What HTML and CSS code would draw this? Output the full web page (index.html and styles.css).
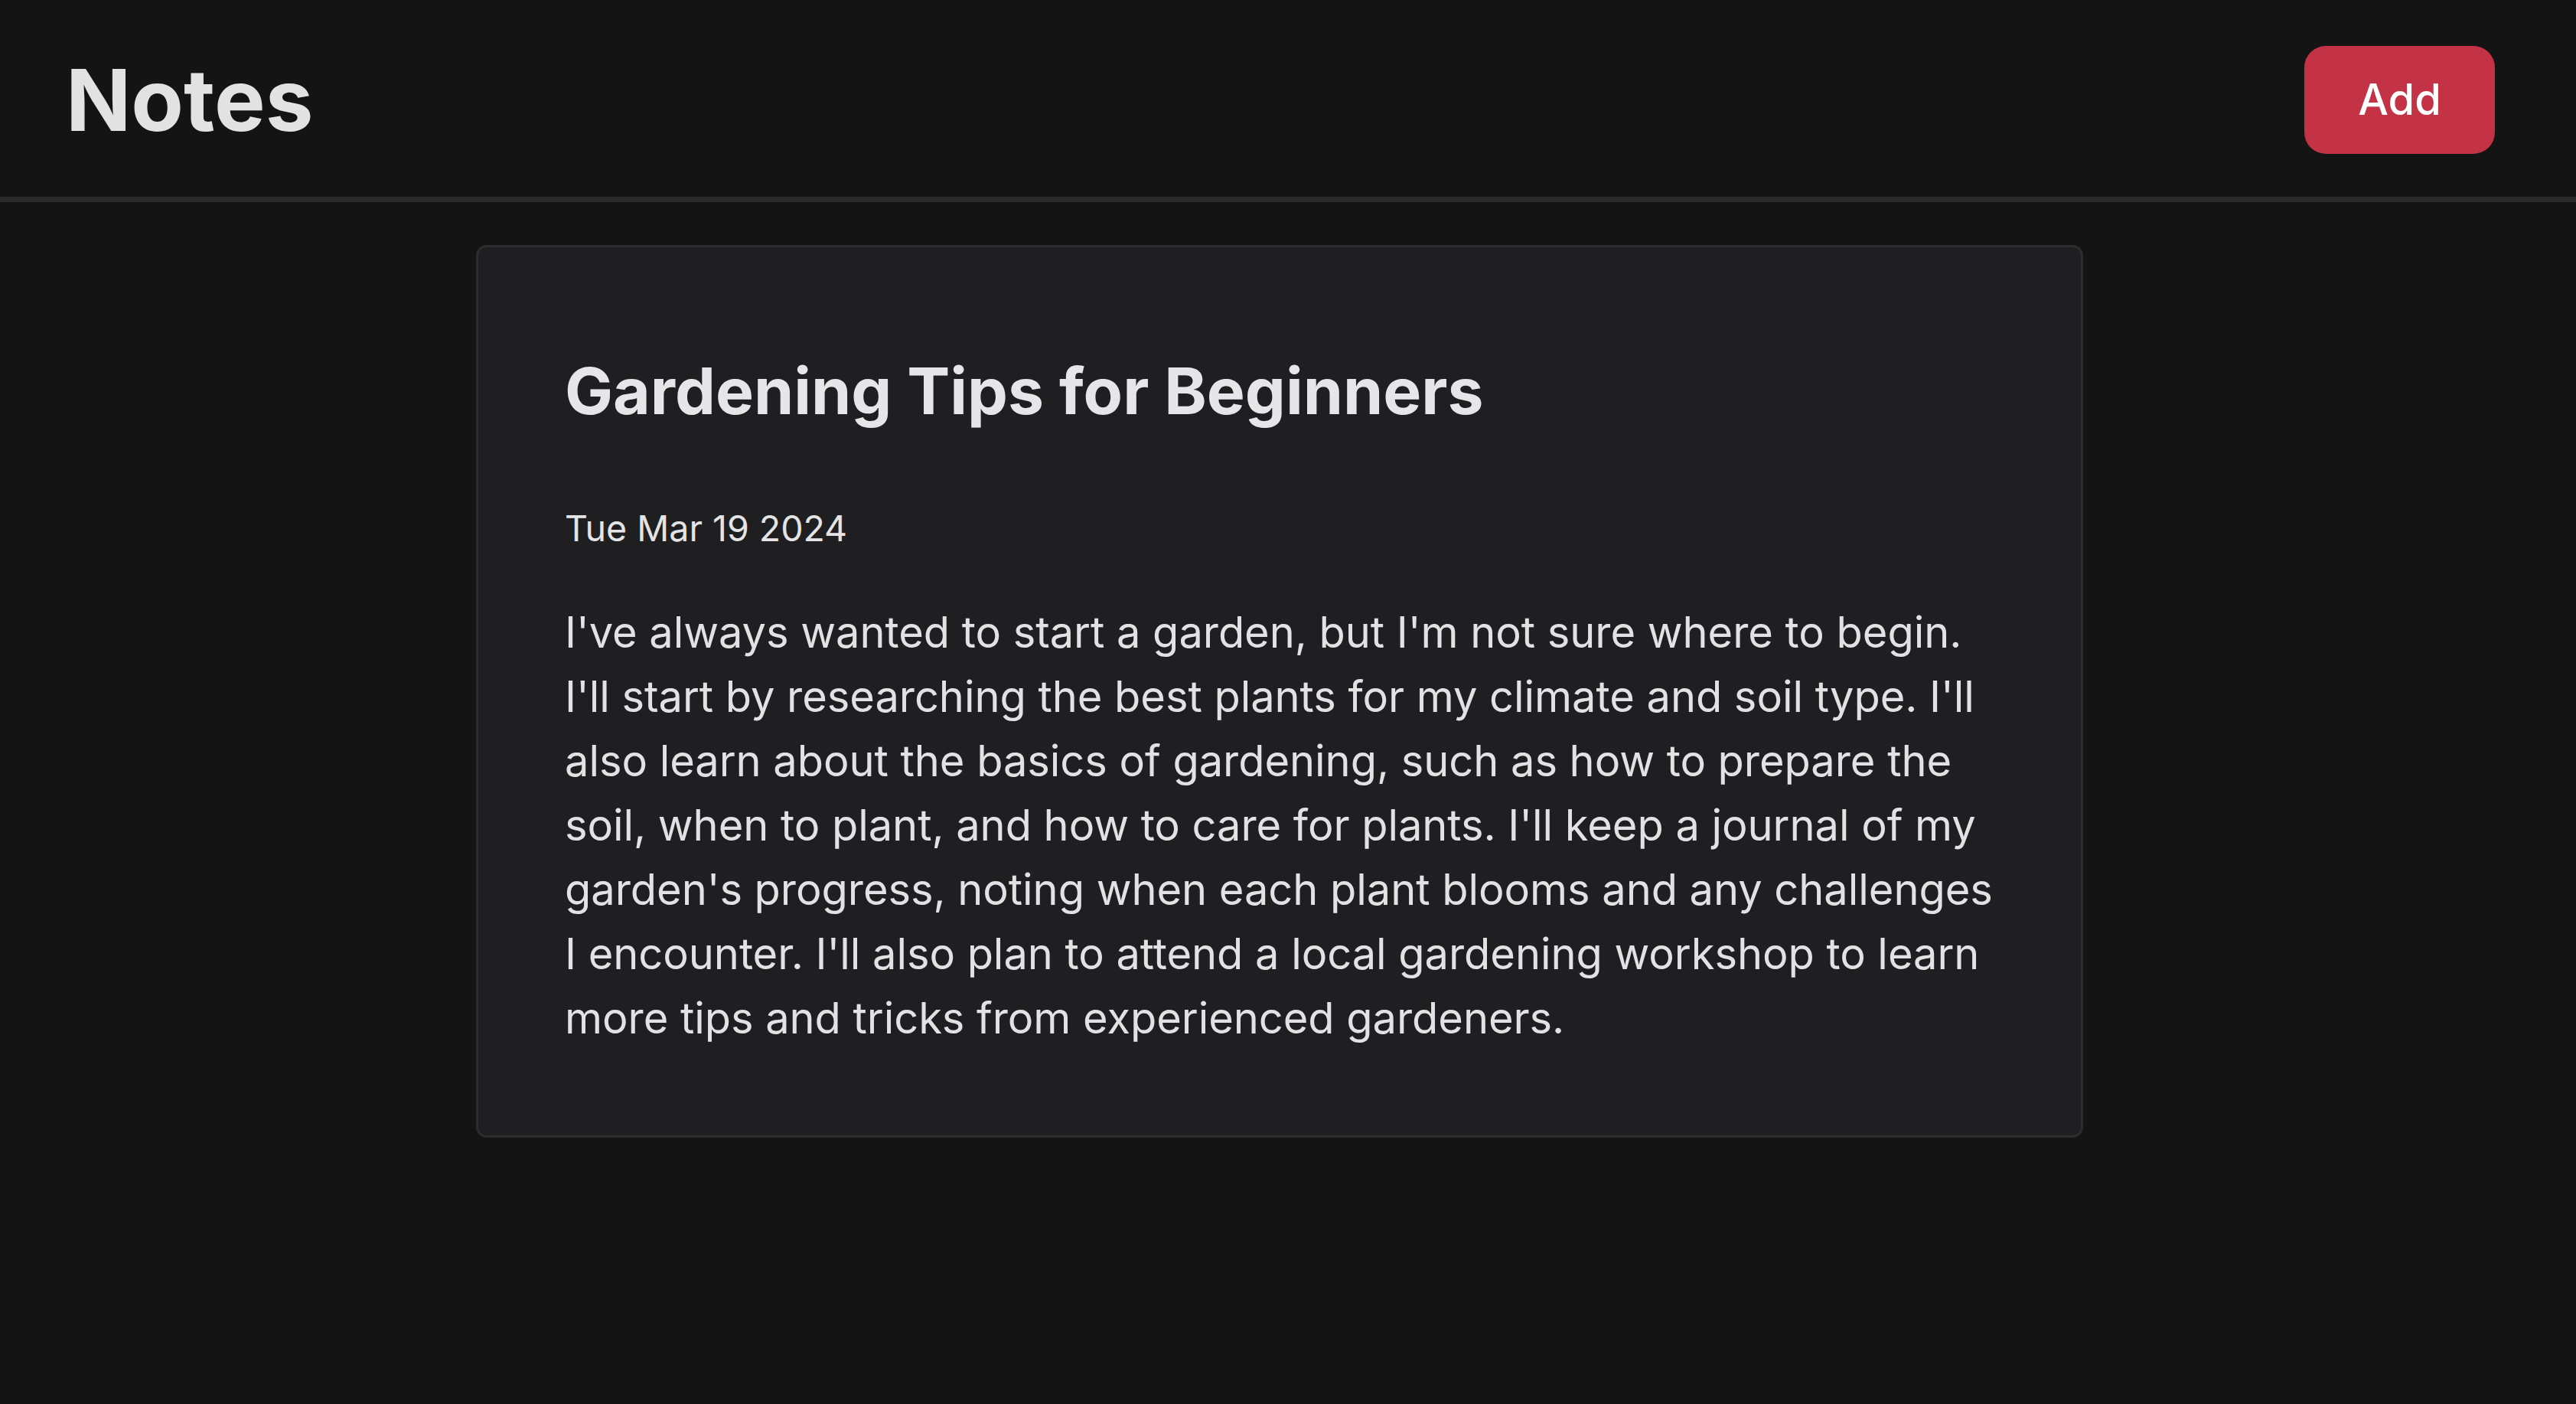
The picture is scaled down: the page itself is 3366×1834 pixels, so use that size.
FILE: index.html
```html
<!DOCTYPE html>
<html lang="en">
<head>
<meta charset="utf-8">
<title>Notes</title>
<link rel="stylesheet" href="styles.css">
</head>
<body>
<header class="topbar">
  <h1 class="brand">Notes</h1>
  <button class="add-btn" type="button">Add</button>
</header>
<main class="content">
  <article class="note-card">
    <h2 class="note-title">Gardening Tips for Beginners</h2>
    <p class="note-date">Tue Mar 19 2024</p>
    <p class="note-body">I've always wanted to start a garden, but I'm not sure where to begin. I'll start by researching the best plants for my climate and soil type. I'll also learn about the basics of gardening, such as how to prepare the soil, when to plant, and how to care for plants. I'll keep a journal of my garden's progress, noting when each plant blooms and any challenges I encounter. I'll also plan to attend a local gardening workshop to learn more tips and tricks from experienced gardeners.</p>
  </article>
</main>
</body>
</html>
```
FILE: styles.css
```css
* { box-sizing: border-box; }

html, body {
  margin: 0;
  padding: 0;
  background: #141414;
}

body {
  font-family: Inter, "Noto Sans", "Liberation Sans", sans-serif;
  color: #e4e4e6;
}

.topbar {
  height: 264px;
  border-bottom: 7px solid #2b2b2c;
  display: flex;
  align-items: center;
  justify-content: space-between;
  padding: 0 106px 0 86px;
}

.brand {
  margin: 0;
  font-size: 112px;
  font-weight: 700;
  color: #e2e2e2;
  line-height: 1.2;
  padding-top: 4px;
}

.add-btn {
  width: 249px;
  height: 141px;
  border: none;
  border-radius: 28px;
  background: #c43345;
  color: #ffffff;
  font-family: Inter, "Noto Sans", sans-serif;
  font-size: 56px;
  font-weight: 500;
  padding: 0;
  margin-top: 3px;
}

.content {
  display: flex;
  justify-content: center;
  padding: 56px 22px 0 0;
}

.note-card {
  width: 2100px;
  background: #1f1f21;
  border: 3px solid #2d2d30;
  border-radius: 14px;
  padding: 112px 104px 111px 113px;
}

.note-title {
  margin: 26px 0 0;
  font-size: 84px;
  font-weight: 700;
  line-height: 1.2;
  color: #e6e6e8;
}

.note-date {
  margin: 93px 0 0;
  font-size: 46.5px;
  line-height: 1.5;
  color: #e4e4e6;
  padding-top: 1px;
}

.note-body {
  margin: 58px 0 0;
  font-size: 56px;
  line-height: 84px;
  letter-spacing: -0.05px;
  color: #e2e2e4;
}
```
